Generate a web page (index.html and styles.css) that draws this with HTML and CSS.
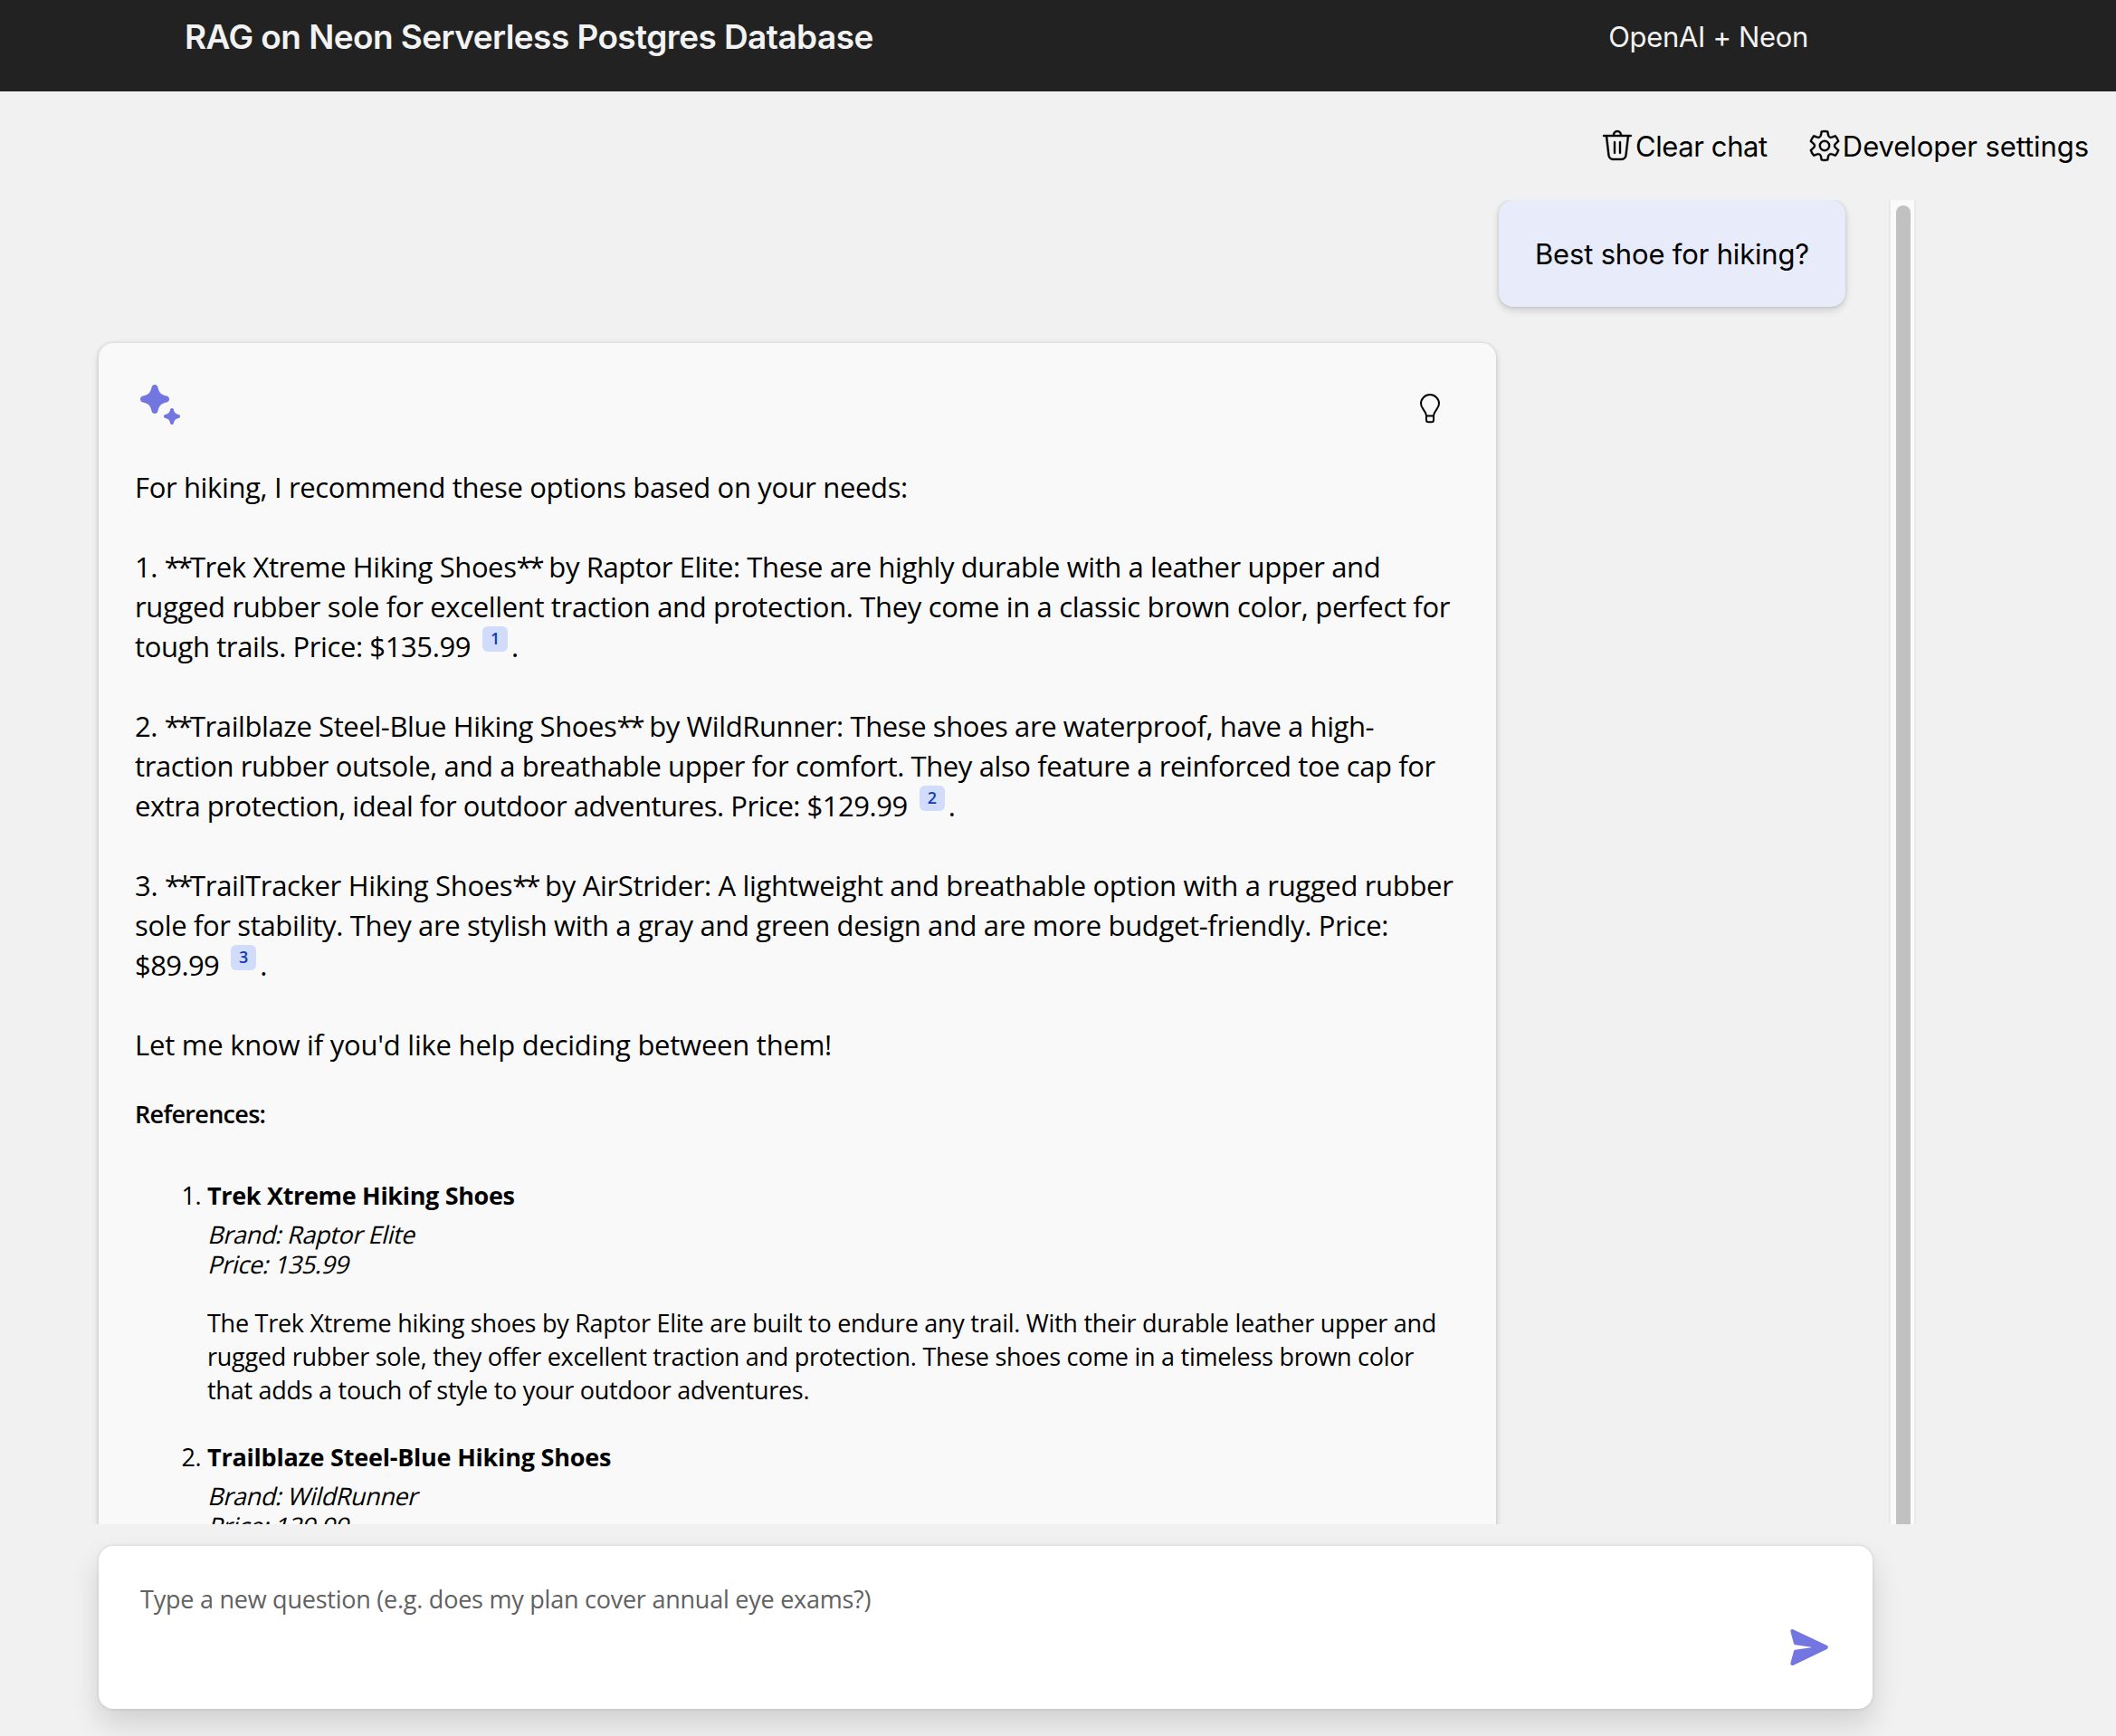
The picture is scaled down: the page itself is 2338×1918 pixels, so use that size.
FILE: index.html
```html
<!DOCTYPE html>
<html lang="en">
<head>
<meta charset="utf-8">
<title>RAG on Neon Serverless Postgres Database</title>
<link rel="stylesheet" href="styles.css">
</head>
<body>
<header class="header">
  <h1 class="header-title">RAG on Neon Serverless Postgres Database</h1>
  <span class="header-side">OpenAI + Neon</span>
</header>

<div class="commands">
  <button class="command clear">
    <svg class="command-icon" viewBox="0 0 20 20"><path d="M8.5 4h3a1.5 1.5 0 0 0-3 0Zm-1 0a2.5 2.5 0 0 1 5 0h5a.5.5 0 0 1 0 1h-1.05l-1.2 10.34A3 3 0 0 1 12.27 18H7.73a3 3 0 0 1-2.98-2.66L3.55 5H2.5a.5.5 0 0 1 0-1h5ZM5.74 15.23A2 2 0 0 0 7.73 17h4.54a2 2 0 0 0 1.99-1.77L15.44 5H4.56l1.18 10.23ZM8.5 7.5c.28 0 .5.22.5.5v6a.5.5 0 0 1-1 0V8c0-.28.22-.5.5-.5ZM12 8a.5.5 0 0 0-1 0v6a.5.5 0 0 0 1 0V8Z"/></svg>
    <span>Clear chat</span>
  </button>
  <button class="command settings">
    <svg class="command-icon" viewBox="0 0 20 20"><path d="M1.91 7.38A8.5 8.5 0 0 1 3.7 4.3a.5.5 0 0 1 .54-.13l1.92.68a1 1 0 0 0 1.32-.76l.36-2a.5.5 0 0 1 .4-.4 8.53 8.53 0 0 1 3.55 0c.2.04.35.2.38.4l.37 2a1 1 0 0 0 1.32.76l1.92-.68a.5.5 0 0 1 .54.13 8.5 8.5 0 0 1 1.78 3.08c.06.2 0 .4-.15.54l-1.56 1.32a1 1 0 0 0 0 1.52l1.56 1.32a.5.5 0 0 1 .15.54 8.5 8.5 0 0 1-1.78 3.08.5.5 0 0 1-.54.13l-1.92-.68a1 1 0 0 0-1.32.76l-.37 2a.5.5 0 0 1-.38.4 8.53 8.53 0 0 1-3.56 0 .5.5 0 0 1-.39-.4l-.36-2a1 1 0 0 0-1.32-.76l-1.92.68a.5.5 0 0 1-.54-.13 8.5 8.5 0 0 1-1.78-3.08.5.5 0 0 1 .15-.54l1.56-1.32a1 1 0 0 0 0-1.52L2.06 7.92a.5.5 0 0 1-.15-.54Zm1.06 0 1.3 1.1a2 2 0 0 1 0 3.04l-1.3 1.1c.3.79.72 1.51 1.25 2.16l1.6-.58a2 2 0 0 1 2.63 1.53l.3 1.67a7.56 7.56 0 0 0 2.5 0l.3-1.67a2 2 0 0 1 2.64-1.53l1.6.57a7.5 7.5 0 0 0 1.24-2.16l-1.3-1.1a2 2 0 0 1 0-3.02l1.3-1.1a7.5 7.5 0 0 0-1.25-2.16l-1.6.57a2 2 0 0 1-2.63-1.52l-.3-1.68a7.55 7.55 0 0 0-2.5 0l-.3 1.68A2 2 0 0 1 5.82 5.8l-1.6-.57a7.5 7.5 0 0 0-1.24 2.16ZM6.9 10a3.1 3.1 0 1 1 6.2 0 3.1 3.1 0 0 1-6.2 0Zm1 0a2.1 2.1 0 1 0 4.2 0 2.1 2.1 0 0 0-4.2 0Z"/></svg>
    <span>Developer settings</span>
  </button>
</div>

<main class="chat">
  <div class="messages">
    <div class="user-message">Best shoe for hiking?</div>
    <article class="answer">
      <div class="answer-bar">
        <svg class="sparkle" viewBox="0 0 44 44">
          <path id="star" d="M16 0c1.7 0 3 1.1 3.400 2.800C20.800 9 23 11.200 29.200 12.600 30.900 13 32 14.300 32 16s-1.100 3-2.800 3.400C23 20.800 20.800 23 19.400 29.200 19 30.900 17.700 32 16 32s-3-1.100-3.400-2.800C11.200 23 9 20.800 2.800 19.400 1.100 19 0 17.700 0 16s1.100-3 2.800-3.400C9 11.200 11.200 9 12.600 2.800 13 1.100 14.300 0 16 0Z"/>
          <use href="#star" transform="translate(26 26) scale(.5625)"/>
        </svg>
        <svg class="bulb" viewBox="0 0 24 34"><path d="M8 25.500C7.700 19.500 2 17.500 2 12a10 10 0 0 1 20 0c0 5.500-5.700 7.500-6 13.500v4.700a2 2 0 0 1-2 2h-4a2 2 0 0 1-2-2ZM8 25.500h8"/></svg>
      </div>
      <div class="answer-text">
        <p><span class="ln l0">For hiking, I recommend these options based on your needs:</span></p>
        <p><span class="ln l1">1. <span class="stars">**</span>Trek Xtreme Hiking Shoes<span class="stars">**</span> by Raptor Elite: These are highly durable with a leather upper and</span>
          <span class="ln l2">rugged rubber sole for excellent traction and protection. They come in a classic brown color, perfect for</span>
          <span class="ln l3">tough trails. Price: $135.99<a class="cite">1</a>.</span></p>
        <p><span class="ln l4">2. <span class="stars">**</span>Trailblaze Steel-Blue Hiking Shoes<span class="stars">**</span> by WildRunner: These shoes are waterproof, have a high-</span>
          <span class="ln l5">traction rubber outsole, and a breathable upper for comfort. They also feature a reinforced toe cap for</span>
          <span class="ln l6">extra protection, ideal for outdoor adventures. Price: $129.99<a class="cite">2</a>.</span></p>
        <p><span class="ln l7">3. <span class="stars">**</span>TrailTracker Hiking Shoes<span class="stars">**</span> by AirStrider: A lightweight and breathable option with a rugged rubber</span>
          <span class="ln l8">sole for stability. They are stylish with a gray and green design and are more budget-friendly. Price:</span>
          <span class="ln l9">$89.99<a class="cite">3</a>.</span></p>
        <p><span class="ln l10">Let me know if you'd like help deciding between them!</span></p>
      </div>
      <h2 class="refs-title">References:</h2>
      <div class="refs">
        <section class="ref">
          <span class="ref-num">1.</span>
          <div class="ref-body">
            <h3 class="ref-name">Trek Xtreme Hiking Shoes</h3>
            <div class="ref-meta">Brand: Raptor Elite</div>
            <div class="ref-meta">Price: 135.99</div>
            <p class="ref-desc">
              <span class="ln">The Trek Xtreme hiking shoes by Raptor Elite are built to endure any trail. With their durable leather upper and</span>
              <span class="ln">rugged rubber sole, they offer excellent traction and protection. These shoes come in a timeless brown color</span>
              <span class="ln">that adds a touch of style to your outdoor adventures.</span>
            </p>
          </div>
        </section>
        <section class="ref">
          <span class="ref-num">2.</span>
          <div class="ref-body">
            <h3 class="ref-name wide">Trailblaze Steel-Blue Hiking Shoes</h3>
            <div class="ref-meta">Brand: WildRunner</div>
            <div class="ref-meta">Price: 129.99</div>
          </div>
        </section>
      </div>
    </article>
  </div>
  <div class="scroll-track"><div class="scroll-thumb"></div></div>
</main>

<div class="question">
  <span class="placeholder">Type a new question (e.g. does my plan cover annual eye exams?)</span>
  <svg class="send" viewBox="0 0 42 40"><path d="M3.700.4 40.700 18.100c1.500.8 1.500 3 0 3.800L3.700 39.700C1.800 40.600 0 39.400.4 37.500L4 24c.2-.8.700-1.200 1.500-1.300L23 20.300c.4-.1.400-.5 0-.6L5.500 17.300C4.700 17.200 4.200 16.800 4 16L.4 2.500C0 .6 1.800-.6 3.700.4Z"/></svg>
</div>
</body>
</html>
```
FILE: styles.css
```css
* { box-sizing: border-box; }

body {
  margin: 0;
  height: 1918px;
  overflow: hidden;
  display: flex;
  flex-direction: column;
  background: #f1f1f1;
  color: #000;
  font-family: "Open Sans", "Noto Sans", sans-serif;
}

h1, h2, h3, p { margin: 0; }

.header {
  flex: none;
  height: 101px;
  padding: 17px 340px 0 204px;
  display: flex;
  justify-content: space-between;
  align-items: flex-start;
  background: #222;
  color: #f2f2f2;
  font-family: Inter, sans-serif;
}
.header-title {
  font-size: 37px;
  line-height: 48px;
  font-weight: 600;
  letter-spacing: -0.57px;
}
.header-side {
  padding-top: 4px;
  font-size: 31px;
  line-height: 40px;
  letter-spacing: -0.33px;
}

.commands {
  flex: none;
  height: 120px;
  padding: 40px 30px 0 0;
  display: flex;
  justify-content: flex-end;
  align-items: flex-start;
  gap: 43px;
}
.command {
  display: flex;
  padding: 0;
  border: 0;
  background: none;
  color: #000;
  font: 31px/40px Inter, sans-serif;
  letter-spacing: -0.4px;
}
.command span { padding-top: 1px; }
.settings { letter-spacing: -0.07px; }
.command-icon {
  width: 40px;
  height: 40px;
  stroke: #000;
  stroke-width: .2;
}

.chat {
  flex: none;
  height: 1463px;
  display: flex;
  overflow: hidden;
}
.messages {
  width: 2087px;
  padding-left: 109px;
  display: flex;
  flex-direction: column;
}
.user-message {
  align-self: flex-end;
  flex: none;
  width: 383px;
  height: 118px;
  margin-right: 48px;
  padding: 40px 0 0 40px;
  border-radius: 16px;
  background: #e8ebfa;
  box-shadow: 0 4px 8px rgba(0, 0, 0, .14), 0 0 4px rgba(0, 0, 0, .12);
  font: 31px/40px Inter, sans-serif;
  letter-spacing: -0.18px;
}
.answer {
  flex: none;
  width: 1544px;
  height: 1500px;
  margin-top: 40px;
  padding: 46px 40px 0;
  border-radius: 16px;
  background: #f9f9f9;
  box-shadow: 0 4px 8px rgba(0, 0, 0, .14), 0 0 4px rgba(0, 0, 0, .12);
}
.answer-bar {
  height: 91px;
  padding: 0 21px 0 6px;
  display: flex;
  justify-content: space-between;
}
.sparkle { width: 44px; height: 44px; fill: #7376e1; }
.bulb {
  width: 24px;
  height: 34px;
  margin-top: 9px;
  fill: none;
  stroke: #000;
  stroke-width: 2;
}
.answer-text {
  display: flex;
  flex-direction: column;
  gap: 44px;
  font-size: 31px;
  line-height: 44px;
}
.ln { display: block; white-space: nowrap; }
.l0 { letter-spacing: -0.36px; }
.l1, .l4 { letter-spacing: -0.4px; }
.l2 { letter-spacing: -0.34px; }
.l3, .l5 { letter-spacing: -0.4px; }
.l6 { letter-spacing: -0.47px; }
.l7 { letter-spacing: -0.33px; }
.l8 { letter-spacing: -0.35px; }
.l9 { letter-spacing: -0.6px; }
.l10 { letter-spacing: -0.23px; }
.stars { letter-spacing: -3px; }

.cite {
  display: inline-block;
  width: 28px;
  height: 28px;
  margin: 0 4px -14px 13px;
  border-radius: 6px;
  background: #d1dbfa;
  color: #123bb6;
  font-size: 18px;
  font-weight: 600;
  line-height: 27px;
  letter-spacing: 0;
  text-align: center;
  vertical-align: 14px;
}

.refs-title {
  margin-top: 36px;
  font-size: 27px;
  line-height: 38px;
  font-weight: 600;
  letter-spacing: -0.7px;
}
.refs {
  margin-top: 52px;
  display: flex;
  flex-direction: column;
  gap: 37px;
  font-size: 27px;
  line-height: 37px;
}
.ref { display: flex; }
.ref-num { width: 80px; padding-right: 7px; text-align: right; letter-spacing: -0.5px; }
.ref-name {
  margin-bottom: 8px;
  font-size: 27px;
  line-height: 37px;
  font-weight: 700;
  letter-spacing: -0.33px;
}
.ref-name.wide { letter-spacing: -0.22px; }
.ref-meta {
  line-height: 33px;
  letter-spacing: -0.4px;
  transform: skewX(-14deg);
  transform-origin: 0 27px;
}
.ref-desc {
  margin-top: 30px;
  line-height: 37px;
  letter-spacing: -0.27px;
}

.scroll-track {
  width: 30px;
  padding: 6px 4px 0 6px;
  border: solid #e9e9e9;
  border-width: 0 2px;
  background: #fafafa;
}
.scroll-thumb {
  width: 16px;
  height: 1500px;
  border-radius: 8px;
  background: #c1c1c1;
}

.question {
  flex: none;
  width: 1960px;
  height: 180px;
  margin: 24px 0 0 109px;
  padding: 40px 49px 0 46px;
  display: flex;
  justify-content: space-between;
  align-items: flex-start;
  border-radius: 16px;
  background: #fff;
  box-shadow: 0 16px 32px rgba(0, 0, 0, .14), 0 0 4px rgba(0, 0, 0, .12);
}
.placeholder {
  color: #616161;
  font-size: 27px;
  line-height: 38px;
  letter-spacing: -0.24px;
}
.send { width: 42px; height: 40px; margin-top: 52px; fill: #7376e1; }
```
